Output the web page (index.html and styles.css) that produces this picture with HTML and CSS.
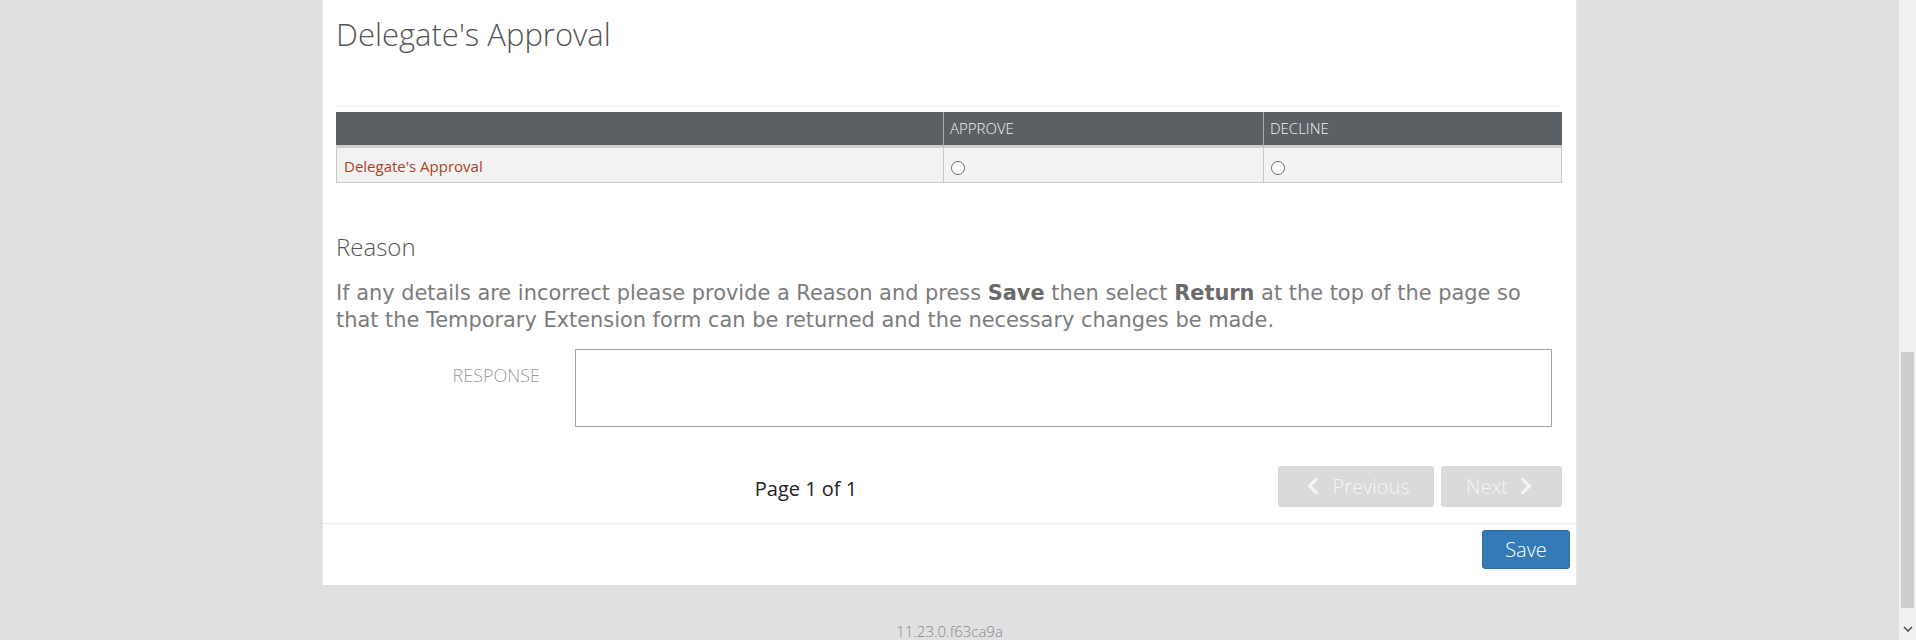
FILE: index.html
```html
<!DOCTYPE html>
<html lang="en">
<head>
<meta charset="utf-8">
<title>Delegate's Approval</title>
<link rel="stylesheet" href="styles.css">
</head>
<body>
<div class="window">
  <div class="main">
    <div class="panel">
      <div class="panel-body">
        <h2 class="title">Delegate's Approval</h2>
        <div class="rule"></div>
        <table class="grid">
          <colgroup>
            <col class="col-label">
            <col class="col-approve">
            <col class="col-decline">
          </colgroup>
          <thead>
            <tr>
              <th></th>
              <th>APPROVE</th>
              <th>DECLINE</th>
            </tr>
          </thead>
          <tbody>
            <tr>
              <td class="row-label">Delegate's Approval</td>
              <td><input type="radio" name="approval" class="radio"></td>
              <td><input type="radio" name="approval" class="radio"></td>
            </tr>
          </tbody>
        </table>

        <h3 class="section-title">Reason</h3>
        <p class="note">If any details are incorrect please provide a Reason and press <b>Save</b> then select <b>Return</b> at the top of the page so<br>that the Temporary Extension form can be returned and the necessary changes be made.</p>

        <div class="form-row">
          <label class="form-label">RESPONSE</label>
          <textarea class="response"></textarea>
        </div>

        <div class="pager">
          <div class="page-info">Page 1 of 1</div>
          <div class="pager-buttons">
            <button class="btn-page btn-prev" type="button">
              <svg class="chev" viewBox="0 0 320 512" width="14" height="20"><path d="M34.52 239.03L228.87 44.69c9.37-9.37 24.57-9.37 33.94 0l22.67 22.67c9.36 9.36 9.37 24.52.04 33.9L131.49 256l154.02 154.75c9.34 9.38 9.32 24.54-.04 33.9l-22.67 22.67c-9.37 9.37-24.57 9.37-33.94 0L34.52 272.97c-9.37-9.37-9.37-24.57 0-33.94z"/></svg>
              <span>Previous</span>
            </button>
            <button class="btn-page btn-next" type="button">
              <span>Next</span>
              <svg class="chev" viewBox="0 0 320 512" width="14" height="20"><path d="M285.48 272.97L91.13 467.31c-9.37 9.37-24.57 9.37-33.94 0l-22.67-22.67c-9.36-9.36-9.38-24.52-.04-33.9L188.51 256 34.48 101.26c-9.34-9.380-9.32-24.54.04-33.9l22.67-22.67c9.37-9.37 24.57-9.37 33.94 0l194.35 194.34c9.37 9.37 9.37 24.57 0 33.94z"/></svg>
            </button>
          </div>
        </div>
      </div>
      <div class="panel-footer">
        <button class="btn-save" type="button">Save</button>
      </div>
    </div>
    <div class="version">11.23.0.f63ca9a</div>
  </div>
  <div class="scrollbar">
    <div class="thumb"></div>
    <div class="arrow-down">
      <svg viewBox="0 0 10 6" width="10" height="6"><path d="M1 1 L5 5 L9 1" fill="none" stroke="#505050" stroke-width="1.6"/></svg>
    </div>
  </div>
</div>
</body>
</html>
```
FILE: styles.css
```css
* { box-sizing: border-box; }

html, body {
  margin: 0;
  height: 100%;
}

body {
  background: #dfe0e2;
  font-family: "Open Sans", "Liberation Sans", sans-serif;
  overflow: hidden;
}

.window {
  display: flex;
  height: 640px;
}

.main {
  flex: 1;
  display: flex;
  flex-direction: column;
  align-items: center;
}

.panel {
  width: 1253px;
  background: #fff;
  box-shadow: -1px 0 0 #e6e7e8, 1px 0 0 #e6e7e8;
}

.panel-body {
  padding: 14px 14px 17px 13px;
}

.title {
  margin: 0;
  font-size: 31px;
  font-weight: 300;
  line-height: 40px;
  color: #555;
}

.rule {
  height: 1px;
  background: #f1f1f1;
  margin: 52px 0 5px;
}

.grid {
  width: 100%;
  border-collapse: separate;
  border-spacing: 0;
  table-layout: fixed;
}

.col-label { width: 607px; }
.col-approve { width: 320px; }
.col-decline { width: 299px; }

.grid th {
  background: #5b6064;
  color: #f2f2f2;
  font-size: 15px;
  font-weight: 300;
  text-align: left;
  line-height: 33px;
  padding: 0 6px;
  border-bottom: 3px solid #cdcecf;
}

.grid th + th {
  border-left: 1px solid #a7aaac;
}

.grid td {
  background: #f2f2f2;
  line-height: 32px;
  padding: 2px 7px 0;
  border-bottom: 1px solid #c9c9c9;
  border-left: 1px solid #c9c9c9;
  font-size: 15px;
}

.grid td:last-child {
  border-right: 1px solid #c9c9c9;
}

.row-label {
  color: #b0401f;
  padding-left: 6px;
}

.radio {
  appearance: none;
  -webkit-appearance: none;
  width: 14px;
  height: 14px;
  margin: 1px 0 0;
  border: 1px solid #6a6a6a;
  border-radius: 50%;
  background: #fff;
  vertical-align: middle;
}

.section-title {
  margin: 48px 0 0;
  font-size: 24px;
  font-weight: 300;
  line-height: 32px;
  color: #555;
}

.note {
  margin: 17px 0 0;
  font-family: "DejaVu Sans", "Liberation Sans", sans-serif;
  font-size: 20.9px;
  line-height: 27px;
  color: #7c7c7c;
}

.note b {
  color: #6a6a6a;
}

.form-row {
  display: flex;
  margin-top: 15px;
}

.form-label {
  width: 204px;
  text-align: right;
  padding-top: 15px;
  font-size: 18px;
  line-height: 22px;
  font-weight: 300;
  color: #9a9a9a;
}

.response {
  margin: 0 0 0 35px;
  width: 977px;
  height: 78px;
  border: 1px solid #a3a3a3;
  border-radius: 0;
  resize: none;
  background: #fff;
}

.pager {
  display: flex;
  align-items: center;
  height: 40px;
  margin-top: 39px;
}

.page-info {
  width: 940px;
  text-align: center;
  font-size: 20px;
  padding-top: 5px;
  color: #222;
}

.pager-buttons {
  margin-left: auto;
  display: flex;
  gap: 7px;
}

.btn-page {
  height: 41px;
  display: flex;
  align-items: center;
  justify-content: center;
  gap: 12px;
  border: none;
  border-radius: 3px;
  background: #dadada;
  color: #f5f5f5;
  font-family: "Open Sans", "Liberation Sans", sans-serif;
  font-size: 20px;
  font-weight: 300;
  padding: 0;
}

.btn-prev { width: 156px; padding-left: 4px; }
.btn-next { width: 121px; gap: 11px; padding-right: 4px; }

.chev {
  fill: #f5f5f5;
}

.panel-footer {
  border-top: 1px solid #ececec;
  padding: 6px 6px 16px;
  display: flex;
  justify-content: flex-end;
}

.btn-save {
  width: 88px;
  height: 39px;
  border: 1px solid #2e6da4;
  border-radius: 3px;
  background: #337ab7;
  color: #fff;
  font-family: "Open Sans", "Liberation Sans", sans-serif;
  font-size: 20px;
  font-weight: 300;
  padding: 0;
}

.version {
  margin-top: 36px;
  font-size: 15px;
  line-height: 20px;
  font-weight: 300;
  color: #888;
}

.scrollbar {
  width: 17px;
  background: #f1f1f1;
  display: flex;
  flex-direction: column;
  align-items: center;
}

.thumb {
  margin-top: 352px;
  width: 13px;
  height: 256px;
  background: #cdcdcd;
}

.arrow-down {
  margin-top: auto;
  height: 22px;
  display: flex;
  align-items: center;
  justify-content: center;
}
```
